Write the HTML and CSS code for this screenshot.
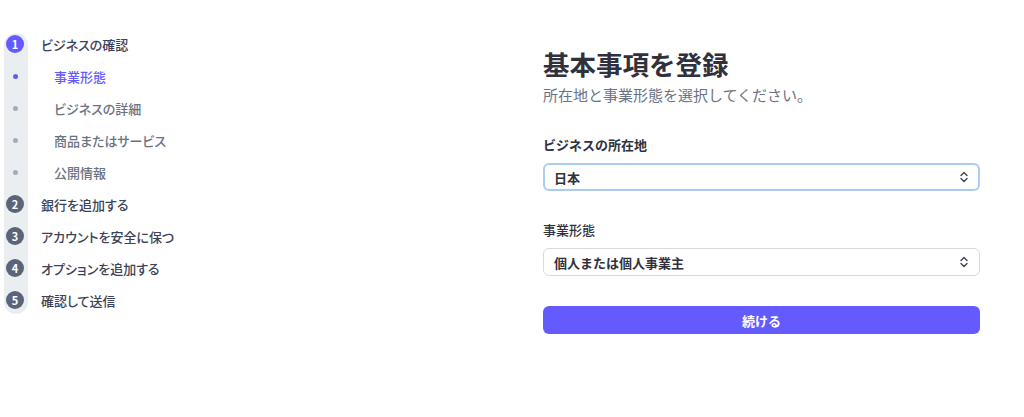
FILE: index.html
```html
<!DOCTYPE html>
<html lang="ja">
<head>
  <meta charset="UTF-8" />
  <title>基本事項を登録</title>
  <link rel="stylesheet" href="styles.css">
</head>
<body>

  <div class="page">

    <!-- Steps -->
    <ul class="steps">
      <li class="step active"><span class="num">1</span><span class="label">ビジネスの確認</span></li>
      <li class="sub current"><span class="dot"></span><span class="label">事業形態</span></li>
      <li class="sub"><span class="dot"></span><span class="label">ビジネスの詳細</span></li>
      <li class="sub"><span class="dot"></span><span class="label">商品またはサービス</span></li>
      <li class="sub"><span class="dot"></span><span class="label">公開情報</span></li>
      <li class="step"><span class="num">2</span><span class="label">銀行を追加する</span></li>
      <li class="step"><span class="num">3</span><span class="label">アカウントを安全に保つ</span></li>
      <li class="step"><span class="num">4</span><span class="label">オプションを追加する</span></li>
      <li class="step"><span class="num">5</span><span class="label">確認して送信</span></li>
    </ul>

    <!-- Form -->
    <div class="main">
      <h1>基本事項を登録</h1>
      <p class="lead">所在地と事業形態を選択してください。</p>

      <div class="field">
        <div class="field-label">ビジネスの所在地</div>
        <div class="select focus">
          <span>日本</span>
          <svg width="10" height="12" viewBox="0 0 10 12"><path d="M2 4.5 L5 1.5 L8 4.5 M2 7.5 L5 10.5 L8 7.5" fill="none" stroke="#3c4257" stroke-width="1.4" stroke-linecap="round" stroke-linejoin="round"/></svg>
        </div>
      </div>

      <div class="field">
        <div class="field-label light">事業形態</div>
        <div class="select">
          <span>個人または個人事業主</span>
          <svg width="10" height="12" viewBox="0 0 10 12"><path d="M2 4.5 L5 1.5 L8 4.5 M2 7.5 L5 10.5 L8 7.5" fill="none" stroke="#3c4257" stroke-width="1.4" stroke-linecap="round" stroke-linejoin="round"/></svg>
        </div>
      </div>

      <button class="submit">続ける</button>
    </div>

  </div>

</body>
</html>
```

FILE: styles.css
```css
body {
  margin: 0;
  background-color: #fff;
  color: #30313d;
  font-family: 'Noto Sans CJK JP', 'Noto Sans', sans-serif;
}

.page {
  display: flex;
  align-items: flex-start;
  padding-top: 28px;
}

.steps {
  position: relative;
  list-style: none;
  margin: 0;
  padding: 0 0 0 6px;
  width: 537px;
  font-feature-settings: "palt";
}

.steps::before {
  content: '';
  position: absolute;
  left: 4px;
  top: 5px;
  bottom: 2px;
  width: 24px;
  border-radius: 12px;
  background-color: #ebeef1;
}

.steps li {
  position: relative;
  display: flex;
  align-items: center;
  height: 32px;
  font-size: 13px;
}

.num {
  width: 18px;
  height: 18px;
  border-radius: 50%;
  background-color: #5b6478;
  color: #fff;
  font-size: 11px;
  font-weight: bold;
  display: flex;
  align-items: center;
  justify-content: center;
  margin-right: 17px;
}

.step.active .num {
  background-color: #635bff;
}

.step .label {
  color: #3c4257;
  font-weight: 500;
}

.dot {
  width: 5px;
  height: 5px;
  border-radius: 50%;
  background-color: #a3acba;
  margin: 0 36px 0 7px;
}

.sub .label {
  color: #6a7383;
  font-weight: 500;
}

.sub.current .dot {
  background-color: #635bff;
}

.sub.current .label {
  color: #635bff;
}

.main {
  width: 437px;
  padding-top: 17px;
}

h1 {
  margin: 0;
  font-size: 26.5px;
  font-weight: bold;
  line-height: 38px;
  color: #30313d;
}

.lead {
  margin: 2px 0 31px;
  font-size: 15px;
  line-height: 20px;
  color: #6a7383;
}

.field {
  margin-bottom: 30px;
}

.field-label {
  font-size: 13px;
  font-weight: bold;
  line-height: 18px;
  margin-bottom: 9px;
}

.field-label.light {
  font-weight: 500;
}

.select {
  display: flex;
  align-items: center;
  justify-content: space-between;
  height: 28px;
  box-sizing: border-box;
  padding: 0 10px;
  border: 1px solid #d5dbe1;
  border-radius: 6px;
  font-size: 13px;
  font-weight: bold;
  color: #30313d;
}

.select.focus {
  border: 2px solid #a9cdf2;
  padding: 0 9px;
}

.submit {
  display: block;
  width: 100%;
  height: 28px;
  border: none;
  border-radius: 6px;
  background-color: #635bff;
  color: #fff;
  font-family: inherit;
  font-size: 13px;
  font-weight: bold;
  cursor: pointer;
}
```
